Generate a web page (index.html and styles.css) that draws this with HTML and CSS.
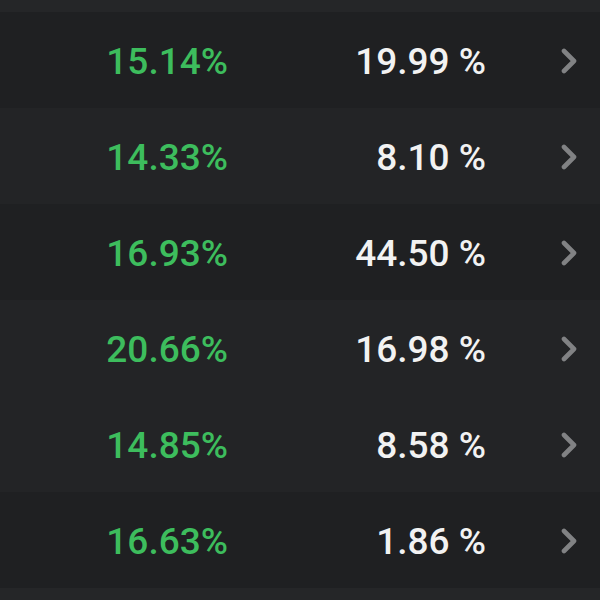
FILE: index.html
```html
<!DOCTYPE html>
<html>
<head>
<meta charset="utf-8">
<link rel="stylesheet" href="styles.css">
</head>
<body>
<div class="list">
  <div class="band"></div>
  <div class="row dark"><span class="rate">15.14%</span><span class="val">19.99 %</span><span class="chev"><svg width="18" height="26" viewBox="0 0 18 26"><path d="M4 3 L14 13 L4 23" fill="none" stroke="#818284" stroke-width="4.6" stroke-linecap="round" stroke-linejoin="round"/></svg></span></div>
  <div class="row light"><span class="rate">14.33%</span><span class="val">8.10 %</span><span class="chev"><svg width="18" height="26" viewBox="0 0 18 26"><path d="M4 3 L14 13 L4 23" fill="none" stroke="#818284" stroke-width="4.6" stroke-linecap="round" stroke-linejoin="round"/></svg></span></div>
  <div class="row dark"><span class="rate">16.93%</span><span class="val">44.50 %</span><span class="chev"><svg width="18" height="26" viewBox="0 0 18 26"><path d="M4 3 L14 13 L4 23" fill="none" stroke="#818284" stroke-width="4.6" stroke-linecap="round" stroke-linejoin="round"/></svg></span></div>
  <div class="row light"><span class="rate">20.66%</span><span class="val">16.98 %</span><span class="chev"><svg width="18" height="26" viewBox="0 0 18 26"><path d="M4 3 L14 13 L4 23" fill="none" stroke="#818284" stroke-width="4.6" stroke-linecap="round" stroke-linejoin="round"/></svg></span></div>
  <div class="row light"><span class="rate">14.85%</span><span class="val">8.58 %</span><span class="chev"><svg width="18" height="26" viewBox="0 0 18 26"><path d="M4 3 L14 13 L4 23" fill="none" stroke="#818284" stroke-width="4.6" stroke-linecap="round" stroke-linejoin="round"/></svg></span></div>
  <div class="row dark"><span class="rate">16.63%</span><span class="val">1.86 %</span><span class="chev"><svg width="18" height="26" viewBox="0 0 18 26"><path d="M4 3 L14 13 L4 23" fill="none" stroke="#818284" stroke-width="4.6" stroke-linecap="round" stroke-linejoin="round"/></svg></span></div>
  <div class="band"></div>
</div>
</body>
</html>
```
FILE: styles.css
```css
html, body {
  margin: 0;
  padding: 0;
  background: #232426;
}
.list {
  width: 600px;
  height: 600px;
  overflow: hidden;
  display: flex;
  flex-direction: column;
  font-family: Roboto, "Liberation Sans", sans-serif;
}
.band {
  height: 12px;
  background: #252628;
  flex: none;
}
.row {
  height: 96px;
  flex: none;
  display: grid;
  grid-template-columns: 228px 258px 1fr;
  align-items: center;
  font-size: 37px;
  font-weight: 500;
  line-height: 1;
  padding-top: 2px;
  box-sizing: border-box;
}
.dark { background: #1f2022; }
.light { background: #232426; }
.rate {
  text-align: right;
  color: #3dbd5d;
}
.val {
  text-align: right;
  color: #f2f2f2;
}
.chev {
  display: flex;
  justify-content: center;
  margin-left: 74px;
  width: 18px;
}
.chev svg { display: block; }
```
